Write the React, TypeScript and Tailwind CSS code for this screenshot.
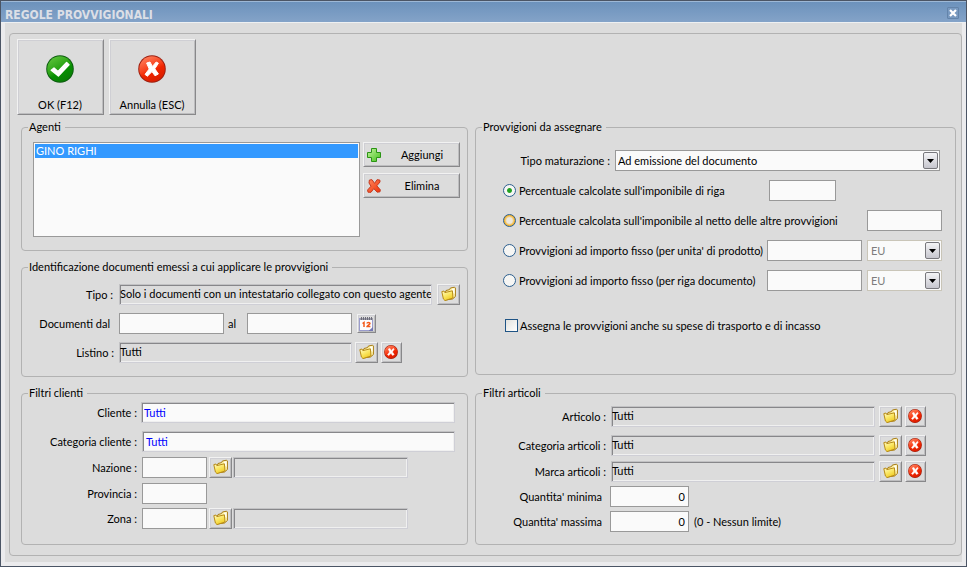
import { useState } from "react";
import type { ReactNode } from "react";

const raised =
  "border border-t-[#f2f2f2] border-l-[#f2f2f2] border-r-[#88888a] border-b-[#88888a] bg-[#dcdcdc] shadow-[inset_1px_1px_0_#cfcfd4,inset_-1px_-1px_0_#bdbdbf]";
const sunken =
  "h-[21px] min-w-0 border border-t-[#c2c2c4] border-l-[#c2c2c4] border-r-[#cfcfd6] border-b-[#cfcfd6] shadow-[inset_1px_1px_0_#87878a,inset_-1px_-1px_0_#f0f0f0] outline-none";
const readout = `bg-[#dcdcdc] pb-[2px] ${sunken}`;
const flat = "h-[21px] min-w-0 border border-[#999] bg-[#fafafa] px-[3px] outline-none";

const OkIcon = () => (
  <svg width="28" height="28" viewBox="0 0 28 28">
    <defs>
      <linearGradient id="okFill" x1="0.2" y1="0" x2="0.8" y2="1">
        <stop offset="0" stopColor="#5fc43c" />
        <stop offset="0.45" stopColor="#2ba416" />
        <stop offset="0.6" stopColor="#079003" />
        <stop offset="1" stopColor="#0a7a06" />
      </linearGradient>
    </defs>
    <circle cx="14" cy="14" r="13.8" fill="#0d5c10" />
    <circle cx="14" cy="14" r="12.8" fill="url(#okFill)" />
    <path d="M5.2 15.2 L8 13 L12 16.6 L20.6 7.4 L23 9.8 L12.4 21 Z" fill="#fff" stroke="#fff" strokeWidth="1.4" strokeLinejoin="round" />
  </svg>
);

const CancelIcon = ({ size = 28 }: { size?: number }) => (
  <svg width={size} height={size} viewBox="0 0 28 28">
    <defs>
      <linearGradient id="noFill" x1="0.2" y1="0" x2="0.7" y2="1">
        <stop offset="0" stopColor="#ff8260" />
        <stop offset="0.45" stopColor="#f8421d" />
        <stop offset="0.6" stopColor="#f02500" />
        <stop offset="1" stopColor="#d81c00" />
      </linearGradient>
    </defs>
    <circle cx="14" cy="14" r="13.8" fill="#9c1f10" />
    <circle cx="14" cy="14" r="12.8" fill="url(#noFill)" />
    <path
      d="M8.6 8 L12 7 L14.4 11.4 L18.2 7 L20.4 8.2 L16.8 13.8 L20.4 19 L17 20.8 L14 16.6 L9.4 21.2 L7 19.4 L11.2 14 Z"
      fill="#fff"
      stroke="#fff"
      strokeLinejoin="round"
    />
  </svg>
);

const PlusIcon = () => (
  <svg width="14" height="14" viewBox="0 0 14 14">
    <defs>
      <linearGradient id="plusFill" x1="0" y1="0" x2="1" y2="1">
        <stop offset="0" stopColor="#c5f2a0" />
        <stop offset="1" stopColor="#43c21c" />
      </linearGradient>
    </defs>
    <path d="M4.5 0.5 H9.5 V4.5 H13.5 V9.5 H9.5 V13.5 H4.5 V9.5 H0.5 V4.5 H4.5 Z" fill="url(#plusFill)" stroke="#2a9414" />
  </svg>
);

const CrossIcon = () => (
  <svg width="14" height="14" viewBox="0 0 14 14">
    <defs>
      <linearGradient id="crossFill" x1="0" y1="0" x2="1" y2="1">
        <stop offset="0" stopColor="#ff8a60" />
        <stop offset="1" stopColor="#f03208" />
      </linearGradient>
    </defs>
    <path
      d="M2.4 1 L5 0.7 L7.6 4.4 L10 0.7 L12.8 1 L13 3 L9.8 6.8 L13.3 10.8 L13 12.8 L10.2 13.2 L6.8 9.6 L4 13.3 L1 13.2 L0.6 11 L4 7.2 L2 4 Z"
      fill="url(#crossFill)"
      stroke="#c43a20"
      strokeLinejoin="round"
    />
  </svg>
);

const FolderIcon = () => (
  <svg width="15" height="16" viewBox="0 0 15 16">
    <defs>
      <linearGradient id="folderFill" x1="0" y1="0" x2="0.6" y2="1">
        <stop offset="0" stopColor="#fffbd0" />
        <stop offset="0.5" stopColor="#fbe96a" />
        <stop offset="1" stopColor="#f0cb20" />
      </linearGradient>
    </defs>
    <path d="M4.5 6 L5 4.5 L8.6 3.6 L9.4 2 L13.6 1.2 L14.4 2 V10.5 L11.5 13 L4 14 Z" fill="#fff3a8" stroke="#a87c14" strokeLinejoin="round" />
    <path d="M11 2.8 L13.6 2.2 V8 L11.4 6 Z" fill="#fffef0" />
    <path d="M0.8 5.6 L3 5 L3.8 6.6 L11.4 4.8 L12 12 L4 14.6 L2.4 13 Z" fill="url(#folderFill)" stroke="#b88c18" strokeLinejoin="round" />
  </svg>
);

const CalendarIcon = () => (
  <svg width="15" height="16" viewBox="0 0 15 16">
    <rect x="0.5" y="2.5" width="13" height="12" fill="#fcfcff" stroke="#9a9ccc" />
    <rect x="1" y="2" width="13" height="2" fill="#9c9caa" />
    <path d="M2.5 1 V4 M4.5 1 V4 M6.5 1 V4 M8.5 1 V4 M10.5 1 V4 M12.5 1 V4" stroke="#6c6c78" strokeWidth="1" />
    <path d="M3.5 7.5 L5 6.5 V11 M8 7.5 C8 6 11 6 11 7.5 C11 8.6 8 9.6 8 10.6 H11.4" fill="none" stroke="#f25a1c" strokeWidth="1.5" />
    <path d="M10 14.5 L14 11 V15 H10 Z" fill="#7478b4" />
  </svg>
);

const Group = ({ title, className, children }: { title: string; className: string; children: ReactNode }) => (
  <fieldset className="min-w-0 rounded-[4px] border border-[#b2b2b2]">
    <legend className="ml-[6px] h-[14px] pr-1 pl-px leading-[14px]">{title}</legend>
    <div className={className}>{children}</div>
  </fieldset>
);

const FolderButton = ({ label }: { label: string }) => (
  <button type="button" aria-label={label} className={`flex h-[21px] w-[23px] shrink-0 items-center justify-center pr-px pb-px ${raised}`}>
    <FolderIcon />
  </button>
);

const ClearButton = ({ label }: { label: string }) => (
  <button type="button" aria-label={label} className={`flex h-[21px] w-[21px] shrink-0 items-center justify-center pr-px pb-px ${raised}`}>
    <CancelIcon size={14} />
  </button>
);

const Arrow = () => (
  <span className="pointer-events-none absolute inset-y-[2px] right-[2px] flex w-[15px] items-center justify-center rounded-[2px] border border-[#77777c] bg-linear-to-b from-[#f4f4f6] to-[#c6c6ce]">
    <svg width="7" height="4" viewBox="0 0 7 4">
      <path d="M0 0 H7 L3.5 4 Z" fill="#000" />
    </svg>
  </span>
);

const CurrencySelect = ({ label }: { label: string }) => (
  <div className="relative ml-[5px] w-[75px] shrink-0">
    <select disabled aria-label={label} className="block h-[21px] w-full appearance-none border border-[#c9c5b8] bg-[#fafafa] px-[3px] text-[#7d7d7d] opacity-100">
      <option>EU</option>
    </select>
    <Arrow />
  </div>
);

const articleFilters = [
  { id: "articolo", label: "Articolo :", gap: "" },
  { id: "categoriaArticoli", label: "Categoria articoli :", gap: "mt-2" },
  { id: "marcaArticoli", label: "Marca articoli :", gap: "mt-[5px]" },
];

const rules = [
  { id: "riga", label: "Percentuale calcolate sull'imponibile di riga", input: "mr-[106px] w-[67px]", fill: "bg-[#f6f6f4]" },
  { id: "netto", label: "Percentuale calcolata sull'imponibile al netto delle altre provvigioni", input: "w-[75px]", fill: "bg-[radial-gradient(circle,#ece8de_35%,#f6b42c_65%)]" },
  { id: "unita", label: "Provvigioni ad importo fisso (per unita' di prodotto)", input: "w-[95px]", currency: true, fill: "bg-[#f6f6f4]" },
  { id: "documento", label: "Provvigioni ad importo fisso (per riga documento)", input: "w-[95px]", currency: true, fill: "bg-[#f6f6f4]" },
];

const App = () => {
  const [rule, setRule] = useState("riga");
  const [agents, setAgents] = useState(["GINO RIGHI"]);

  return (
    <div className="flex min-h-screen flex-col border border-[#4b5565] bg-[#dcdcdc] font-[Lato,sans-serif] text-[11px] leading-[14px] text-black">
      <header className="flex h-[22px] items-center justify-between border-t border-t-[#9db8d6] border-b border-b-[#eef0f2] bg-linear-to-b from-[#6c92bc] to-[#84a3c8] pr-[7px] pl-1">
        <h1 className="mt-[6px] font-['DejaVu_Sans_Condensed','DejaVu_Sans',sans-serif] text-[12px] font-bold text-[#dcdfe6]">REGOLE PROVVIGIONALI</h1>
        <button type="button" aria-label="Chiudi" className="mt-px flex h-3 w-3 items-center justify-center rounded-[1px] border border-[#6384aa] bg-[#7899c0]">
          <svg width="8" height="8" viewBox="0 0 8 8" className="shrink-0">
            <path d="M1 1 L7 7 M7 1 L1 7" stroke="#fff" strokeWidth="2.2" />
          </svg>
        </button>
      </header>

      <main className="flex-1 border-x-4 border-b-4 border-[#ebebed] pt-[10px] pb-[6px] pl-1">
        <div className="rounded-[4px] border border-[#b2b2b2] pt-[5px] pr-[5px] pb-[10px] pl-[7px]">
          <div className="flex gap-[5px]">
            <button type="button" className={`flex h-[76px] w-[87px] flex-col items-center justify-between pt-[15px] pr-px pb-[2px] ${raised}`}>
              <OkIcon />
              OK (F12)
            </button>
            <button type="button" className={`flex h-[76px] w-[87px] flex-col items-center justify-between pt-[15px] pr-px pb-[2px] ${raised}`}>
              <CancelIcon />
              Annulla (ESC)
            </button>
          </div>

          <div className="mt-[5px] ml-1 grid grid-cols-[minmax(0,447fr)_minmax(0,481fr)] gap-[7px]">
            <div className="flex flex-col gap-[9px]">
              <Group title="Agenti" className="pt-2 pr-[7px] pb-[13px] pl-[11px]">
                <div className="flex items-start gap-[3px]">
                  <select
                    multiple
                    size={6}
                    aria-label="Agenti"
                    value={agents}
                    onChange={(e) => setAgents(Array.from(e.target.selectedOptions, (o) => o.value))}
                    className="h-[95px] min-w-0 flex-1 overflow-hidden border border-[#999] bg-[#fafafa] p-px outline-none"
                  >
                    <option value="GINO RIGHI" className="h-[14px] min-h-0 px-px py-0 leading-[14px] checked:bg-[linear-gradient(#3399ff,#3399ff)] checked:[-webkit-text-fill-color:white]">
                      GINO RIGHI
                    </option>
                  </select>
                  <div className="flex w-[97px] shrink-0 flex-col gap-[6px]">
                    <button type="button" className={`flex h-[25px] items-center pl-[3px] ${raised}`}>
                      <PlusIcon />
                      <span className="flex-1 pt-px pl-1">Aggiungi</span>
                    </button>
                    <button type="button" className={`flex h-[25px] items-center pl-[3px] ${raised}`}>
                      <CrossIcon />
                      <span className="flex-1 pt-px pl-1">Elimina</span>
                    </button>
                  </div>
                </div>
              </Group>

              <Group title="Identificazione documenti emessi a cui applicare le provvigioni" className="pt-[10px] pr-[7px] pb-[13px]">
                <div className="flex items-center">
                  <label htmlFor="tipo" className="w-[97px] shrink-0 pr-[6px] text-right">Tipo :</label>
                  <input id="tipo" readOnly defaultValue="Solo i documenti con un intestatario collegato con questo agente" className={`mr-[5px] flex-1 ${readout}`} />
                  <FolderButton label="Scegli tipo" />
                </div>
                <div className="mt-2 flex items-center">
                  <label htmlFor="dal" className="w-[97px] shrink-0 pr-[9px] text-right">Documenti dal</label>
                  <input id="dal" className={`w-[105px] ${flat}`} />
                  <label htmlFor="al" className="w-[23px] shrink-0 pl-1">al</label>
                  <input id="al" className={`mr-[5px] w-[105px] ${flat}`} />
                  <button type="button" aria-label="Calendario" className={`flex h-[19px] w-[19px] shrink-0 items-center justify-center ${raised}`}>
                    <CalendarIcon />
                  </button>
                </div>
                <div className="mt-2 flex items-center">
                  <label htmlFor="listino" className="w-[97px] shrink-0 pr-[5px] text-right">Listino :</label>
                  <input id="listino" readOnly defaultValue="Tutti" className={`mr-[3px] flex-1 ${readout}`} />
                  <FolderButton label="Scegli listino" />
                  <div className="mr-[58px] ml-[3px]">
                    <ClearButton label="Azzera listino" />
                  </div>
                </div>
              </Group>

              <Group title="Filtri clienti" className="pt-[2px] pr-3 pb-[15px]">
                <div className="flex items-center">
                  <label htmlFor="cliente" className="w-[119px] shrink-0 pr-1 text-right">Cliente :</label>
                  <input id="cliente" defaultValue="Tutti" className={`flex-1 bg-[#fafafa] pl-[2px] text-[#0000ff] ${sunken}`} />
                </div>
                <div className="mt-2 flex items-center">
                  <label htmlFor="categoriaCliente" className="w-[120px] shrink-0 pr-[5px] text-right">Categoria cliente :</label>
                  <input id="categoriaCliente" defaultValue="Tutti" className={`flex-1 bg-[#fafafa] pl-[3px] text-[#0000ff] ${sunken}`} />
                </div>
                <div className="mt-[5px] flex items-center">
                  <label htmlFor="nazione" className="w-[120px] shrink-0 pr-[5px] text-right">Nazione :</label>
                  <input id="nazione" className={`mr-[2px] w-[65px] ${flat}`} />
                  <FolderButton label="Scegli nazione" />
                  <input readOnly aria-label="Descrizione nazione" className={`mr-[47px] ml-px flex-1 ${readout}`} />
                </div>
                <div className="mt-[5px] flex items-center">
                  <label htmlFor="provincia" className="w-[120px] shrink-0 pr-[5px] text-right">Provincia :</label>
                  <input id="provincia" className={`w-[65px] ${flat}`} />
                </div>
                <div className="mt-1 flex items-center">
                  <label htmlFor="zona" className="w-[120px] shrink-0 pr-[5px] text-right">Zona :</label>
                  <input id="zona" className={`mr-[2px] w-[65px] ${flat}`} />
                  <FolderButton label="Scegli zona" />
                  <input readOnly aria-label="Descrizione zona" className={`mr-[47px] ml-px flex-1 ${readout}`} />
                </div>
              </Group>
            </div>

            <div className="flex flex-col justify-between">
              <Group title="Provvigioni da assegnare" className="pt-4 pr-[13px] pb-[38px] pl-[27px]">
                <div className="mr-[2px] flex items-center">
                  <label htmlFor="maturazione" className="w-[112px] shrink-0 pr-[5px] text-right">Tipo maturazione :</label>
                  <div className="relative min-w-0 flex-1">
                    <select id="maturazione" className="block h-[21px] w-full appearance-none border border-[#999] bg-[#fafafa] px-[2px] outline-none">
                      <option>Ad emissione del documento</option>
                    </select>
                    <Arrow />
                  </div>
                </div>
                {rules.map((r) => (
                  <div key={r.id} className="mt-[9px] flex items-center">
                    <label className="flex min-w-0 flex-1 items-center gap-[3px] whitespace-nowrap">
                      <input
                        type="radio"
                        name="regola"
                        checked={rule === r.id}
                        onChange={() => setRule(r.id)}
                        className={`h-[13px] w-[13px] shrink-0 appearance-none rounded-full border border-[#2c5f8f] checked:bg-[radial-gradient(circle,#21a121_25%,#f6f6f4_38%)] ${r.fill}`}
                      />
                      {r.label}
                    </label>
                    <input aria-label={r.label} className={`shrink-0 ${r.input} ${flat}`} />
                    {r.currency && <CurrencySelect label="Valuta" />}
                  </div>
                ))}
                <label className="mt-6 ml-[2px] flex h-[21px] items-center gap-[2px] whitespace-nowrap">
                  <input type="checkbox" className="h-[13px] w-[13px] shrink-0 appearance-none border border-[#1f5485] bg-linear-to-br from-[#e2e2de] to-white checked:bg-[#1f5485]" />
                  Assegna le provvigioni anche su spese di trasporto e di incasso
                </label>
              </Group>

              <Group title="Filtri articoli" className="pt-[6px] pr-[29px] pb-3">
                {articleFilters.map((f) => (
                  <div key={f.id} className={`flex items-center ${f.gap}`}>
                    <label htmlFor={f.id} className="w-[135px] shrink-0 pr-[5px] text-right">{f.label}</label>
                    <input id={f.id} readOnly defaultValue="Tutti" className={`mr-1 flex-1 ${readout}`} />
                    <FolderButton label="Scegli" />
                    <div className="ml-[3px]">
                      <ClearButton label="Azzera" />
                    </div>
                  </div>
                ))}
                <div className="mt-1 flex items-center">
                  <label htmlFor="minima" className="w-[134px] shrink-0 pr-2 text-right">Quantita' minima</label>
                  <input id="minima" defaultValue="0" className={`w-[79px] text-right ${flat}`} />
                </div>
                <div className="mt-1 flex items-center">
                  <label htmlFor="massima" className="w-[134px] shrink-0 pr-2 text-right">Quantita' massima</label>
                  <input id="massima" defaultValue="0" className={`mr-[5px] w-[79px] text-right ${flat}`} />
                  (0 - Nessun limite)
                </div>
              </Group>
            </div>
          </div>
        </div>
      </main>
    </div>
  );
};

export default App;
